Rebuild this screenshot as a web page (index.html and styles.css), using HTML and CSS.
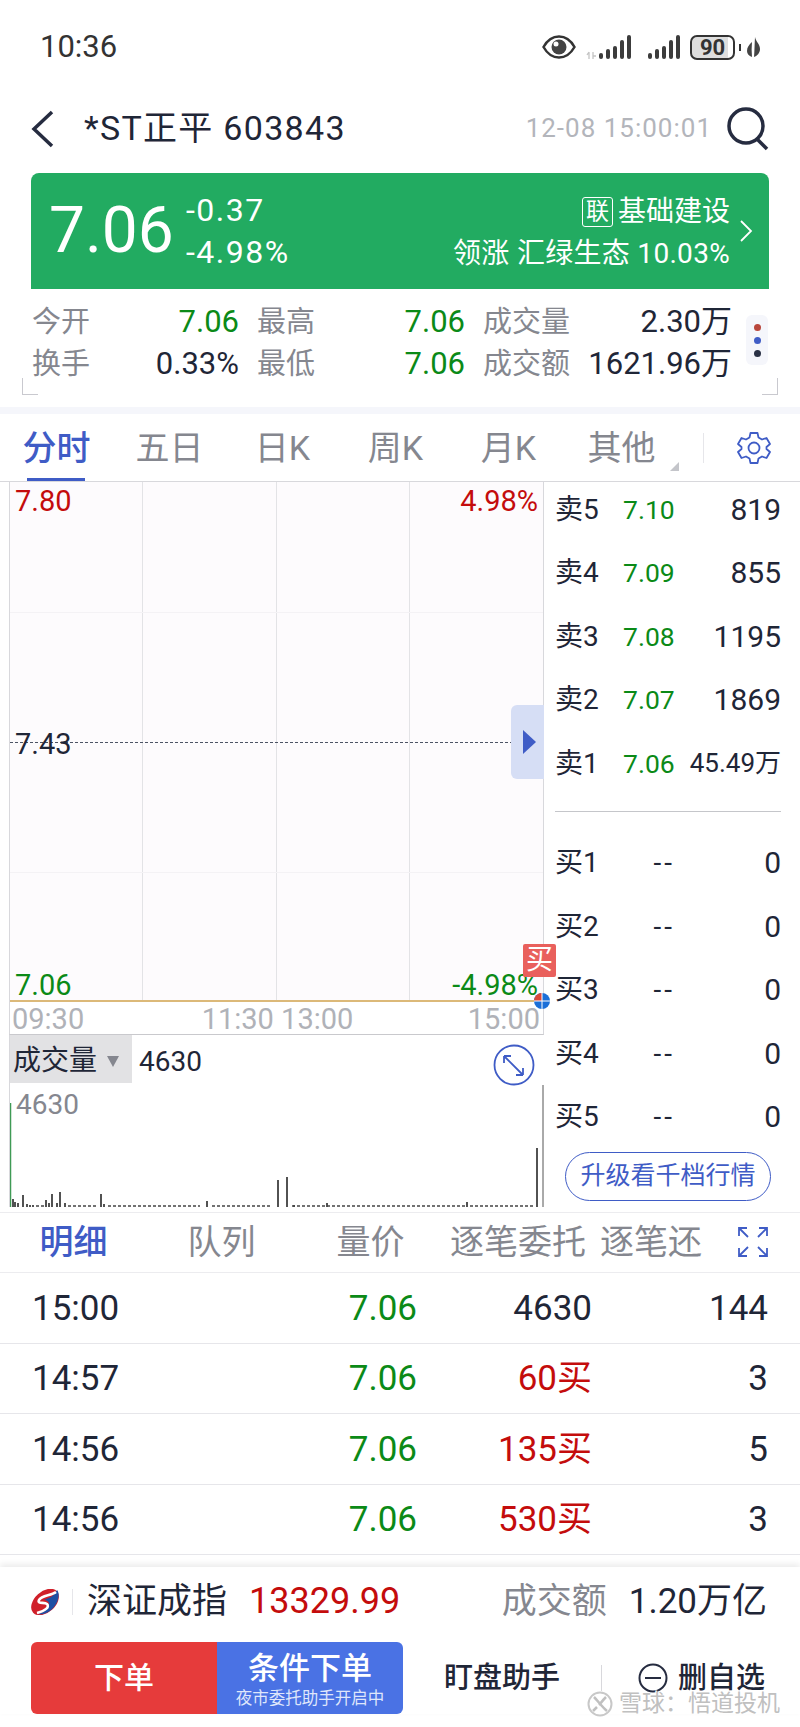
FILE: index.html
```html
<!DOCTYPE html>
<html lang="zh-CN">
<head>
    <meta charset="UTF-8">
    <meta name="viewport" content="width=device-width, initial-scale=1.0">
    <title>*ST正平 603843</title>
    <link rel="stylesheet" href="styles.css">
</head>
<body>
    <div class="page">
        <div class="status-bar">
            <span class="clock">10:36</span>
            <div class="status-icons">
                <svg width="34" height="24" viewBox="0 0 34 24"><path d="M1.500 12C6 4 11 1.500 17 1.500S28 4 32.500 12C28 20 23 22.500 17 22.500S6 20 1.500 12Z" fill="none" stroke="#333" stroke-width="2.500"/><circle cx="17" cy="12" r="7.500" fill="#444"/><circle cx="14" cy="9" r="2.500" fill="#fff"/></svg>
                <svg width="46" height="26" viewBox="0 0 46 26"><path d="M3 25v-7M1 21l2-3M7 25v-7M7 22h3" stroke="#c4c4c4" stroke-width="1.300" fill="none"/><g fill="#3c3c3c"><rect x="13" y="19" width="4" height="6" rx="2"/><rect x="20" y="15" width="4" height="10" rx="2"/><rect x="27" y="12" width="4" height="13" rx="2"/><rect x="34" y="6" width="4" height="19" rx="2"/><rect x="41" y="1" width="4" height="24" rx="2"/></g></svg>
                <svg width="32" height="26" viewBox="0 0 32 26"><g fill="#3c3c3c"><rect x="0" y="19" width="4" height="6" rx="2"/><rect x="7" y="15" width="4" height="10" rx="2"/><rect x="14" y="12" width="4" height="13" rx="2"/><rect x="21" y="6" width="4" height="19" rx="2"/><rect x="28" y="1" width="4" height="24" rx="2"/></g></svg>
                <div class="battery"><span class="battery-level">90</span></div>
                <svg class="leaf" width="13" height="20" viewBox="0 0 13 20"><path d="M8 0C9 5 13 7 13 12C13 16 10 19 7 20C7.500 14 7.500 8 8 0ZM5 5C2 8 0 10 0 14C0 17 2 19 5 20C4.500 15 4.500 10 5 5Z" fill="#444"/></svg>
            </div>
        </div>

        <div class="nav-bar">
            <svg class="back-icon" width="24" height="38" viewBox="0 0 24 38"><path d="M21 2L3 19L21 36" fill="none" stroke="#262c40" stroke-width="3.500"/></svg>
            <span class="stock-name">*ST正平 603843</span>
            <span class="stock-time">12-08 15:00:01</span>
            <svg class="search-icon" width="44" height="44" viewBox="0 0 44 44"><circle cx="20" cy="19" r="17" fill="none" stroke="#262c40" stroke-width="3.500"/><path d="M31 32L41 42" stroke="#262c40" stroke-width="3.500"/></svg>
        </div>

        <div class="banner">
            <div class="price">7.06</div>
            <div class="change">
                <span>-0.37</span>
                <span>-4.98%</span>
            </div>
            <div class="sector">
                <div class="sector-line"><span class="sector-tag">联</span>基础建设</div>
                <div class="sector-line">领涨 汇绿生态 10.03%</div>
            </div>
            <svg class="banner-arrow" width="14" height="22" viewBox="0 0 14 22"><path d="M2 1L12 11L2 21" fill="none" stroke="#fff" stroke-width="1.800"/></svg>
        </div>

        <div class="stats">
            <div class="stats-grid">
                <span class="stat-label">今开</span><span class="stat-value green">7.06</span>
                <span class="stat-label">最高</span><span class="stat-value green">7.06</span>
                <span class="stat-label">成交量</span><span class="stat-value">2.30万</span>
                <span class="stat-label">换手</span><span class="stat-value">0.33%</span>
                <span class="stat-label">最低</span><span class="stat-value green">7.06</span>
                <span class="stat-label">成交额</span><span class="stat-value">1621.96万</span>
            </div>
            <div class="more-dots"><i class="dot-red"></i><i class="dot-blue"></i><i class="dot-dark"></i></div>
        </div>
        <div class="strip"></div>

        <div class="chart-tabs">
            <div class="chart-tab active">分时</div>
            <div class="chart-tab">五日</div>
            <div class="chart-tab">日K</div>
            <div class="chart-tab">周K</div>
            <div class="chart-tab">月K</div>
            <div class="chart-tab other">其他</div>
            <div class="tab-sep"></div>
            <svg class="gear-icon" width="34" height="34" viewBox="0 0 34 34"><path d="M13.500 2H20.500L21.500 6.500L25 8.500L29.500 7L33 13L29.500 16V18L33 21L29.500 27L25 25.500L21.500 27.500L20.500 32H13.500L12.500 27.500L9 25.500L4.500 27L1 21L4.500 18V16L1 13L4.500 7L9 8.500L12.500 6.500Z" fill="none" stroke="#3f5cc6" stroke-width="1.800" stroke-linejoin="round"/><circle cx="17" cy="17" r="5.500" fill="none" stroke="#3f5cc6" stroke-width="1.800"/></svg>
        </div>

        <div class="quote">
            <div class="chart-col">
                <div class="price-chart">
                    <div class="grid-v"></div>
                    <div class="grid-v"></div>
                    <div class="grid-v"></div>
                    <div class="grid-h"></div>
                    <div class="grid-mid"></div>
                    <div class="grid-h low"></div>
                    <span class="axis red top-left">7.80</span>
                    <span class="axis red top-right">4.98%</span>
                    <span class="axis mid-left">7.43</span>
                    <span class="axis green bottom-left">7.06</span>
                    <span class="axis green bottom-right">-4.98%</span>
                    <div class="handle"><i></i></div>
                    <div class="buy-badge">买</div>
                    <div class="price-line"></div>
                    <svg class="end-dot" width="16" height="16" viewBox="0 0 16 16"><circle cx="8" cy="8" r="8" fill="#1b6fd8"/><path d="M0 8a8 8 0 0 1 8-8v8Z" fill="#d9483b"/><path d="M8 0v16M0 8h16" stroke="#fff" stroke-width="1"/></svg>
                </div>
                <div class="time-axis">
                    <span>09:30</span>
                    <span class="time-mid">11:30 13:00</span>
                    <span>15:00</span>
                </div>
                <div class="volume">
                    <div class="volume-head">
                        <div class="volume-select">成交量<i></i></div>
                        <span class="volume-now">4630</span>
                    </div>
                    <span class="volume-max">4630</span>
                    <svg class="expand-round" width="42" height="42" viewBox="0 0 42 42"><circle cx="21" cy="21" r="19.500" fill="none" stroke="#3f5cc6" stroke-width="1.800"/><path d="M11 12L30 31M11 12V19M11 12H18M30 31V24M30 31H23" fill="none" stroke="#3f5cc6" stroke-width="1.800"/></svg>
                    <svg class="volume-bars" width="534" height="122" viewBox="0 0 534 122">
                        <path d="M.5 18V122" stroke="#3f9a55" stroke-width="1.500"/>
                        <path d="M3 114V122M5 117V122M8 118V122M13 110V122M17 119V122M20 120V122M23 120V122M36 115V122M39 118V122M42 109V122M47 118V122M50 107V122M55 118V122M91 109V122M94 119V122M197 116V122M268 95V122M277 92V122M284 120V122M317 118V122M457 117V122M527 63V122" stroke="#1a1a1a" stroke-width="1.500"/>
                        <path d="M26 121H34M58 121H88M98 121H190M202 121H262M282 121H455M460 121H525" stroke="#444" stroke-width="1.500" stroke-dasharray="3 2"/>
                        <path d="M533 0V122" stroke="#555" stroke-width="1"/>
                    </svg>
                </div>
            </div>

            <div class="book">
                <div class="book-rows">
                    <div class="book-row"><span>卖5</span><span class="green">7.10</span><span class="qty">819</span></div>
                    <div class="book-row"><span>卖4</span><span class="green">7.09</span><span class="qty">855</span></div>
                    <div class="book-row"><span>卖3</span><span class="green">7.08</span><span class="qty">1195</span></div>
                    <div class="book-row"><span>卖2</span><span class="green">7.07</span><span class="qty">1869</span></div>
                    <div class="book-row"><span>卖1</span><span class="green">7.06</span><span class="qty small">45.49万</span></div>
                </div>
                <div class="book-sep"></div>
                <div class="book-rows">
                    <div class="book-row"><span>买1</span><span class="dash">--</span><span class="qty">0</span></div>
                    <div class="book-row"><span>买2</span><span class="dash">--</span><span class="qty">0</span></div>
                    <div class="book-row"><span>买3</span><span class="dash">--</span><span class="qty">0</span></div>
                    <div class="book-row"><span>买4</span><span class="dash">--</span><span class="qty">0</span></div>
                    <div class="book-row"><span>买5</span><span class="dash">--</span><span class="qty">0</span></div>
                </div>
                <div class="upgrade-btn">升级看千档行情</div>
            </div>
        </div>

        <div class="detail-tabs">
            <div class="detail-tab active">明细</div>
            <div class="detail-tab">队列</div>
            <div class="detail-tab">量价</div>
            <div class="detail-tab wide">逐笔委托</div>
            <div class="detail-tab clipped">逐笔还原</div>
            <svg class="expand-icon" width="30" height="30" viewBox="0 0 30 30"><path d="M1 9V1H9M21 1H29V9M29 21V29H21M9 29H1V21M1 1L10 10M29 1L20 10M29 29L20 20M1 29L10 20" fill="none" stroke="#3f5cc6" stroke-width="1.800"/></svg>
        </div>

        <div class="trades">
            <div class="trade-row"><span>15:00</span><span class="green">7.06</span><span>4630</span><span>144</span></div>
            <div class="trade-row"><span>14:57</span><span class="green">7.06</span><span class="red">60买</span><span>3</span></div>
            <div class="trade-row"><span>14:56</span><span class="green">7.06</span><span class="red">135买</span><span>5</span></div>
            <div class="trade-row"><span>14:56</span><span class="green">7.06</span><span class="red">530买</span><span>3</span></div>
        </div>

        <div class="footer">
            <div class="index-bar">
                <svg class="index-logo" width="28" height="26" viewBox="0 0 28 26"><ellipse cx="14" cy="13" rx="16" ry="10.500" transform="rotate(-42 14 13)" fill="#d0202a"/><path d="M26 1C29 4 28 12 23 18C18 24 12 26 7 25C13 23 18 20 18 15C18 12 15 11 13 11C17 9 23 8 26 1Z" fill="#1e4fa3"/><path d="M25 3C20 7 11 6 8 11C6 15 13 13 16 15C19 18 14 22 6 24" fill="none" stroke="#fff" stroke-width="2.600"/></svg>
                <span class="index-sep"></span>
                <span class="index-name">深证成指</span>
                <span class="index-value">13329.99</span>
                <span class="index-label">成交额</span>
                <span class="index-amount">1.20万亿</span>
            </div>
            <div class="action-bar">
                <div class="order-btns">
                    <div class="order-btn">下单</div>
                    <div class="cond-btn">
                        <span class="cond-title">条件下单</span>
                        <span class="cond-sub">夜市委托助手开启中</span>
                    </div>
                </div>
                <span class="action-link helper">盯盘助手</span>
                <span class="action-sep"></span>
                <svg class="minus-icon" width="30" height="30" viewBox="0 0 30 30"><circle cx="15" cy="15" r="13.500" fill="none" stroke="#262c40" stroke-width="2"/><path d="M7 15H23" stroke="#262c40" stroke-width="2"/></svg>
                <span class="action-link">删自选</span>
            </div>
        </div>

        <div class="watermark">
            <svg width="26" height="26" viewBox="0 0 26 26"><circle cx="13" cy="13" r="11.500" fill="#fff" stroke="#c8c8c8" stroke-width="2"/><path d="M7 6C11 10 15 16 20 20M19 6C15 10 14 12 12 14M6 20L10 16" fill="none" stroke="#c0c0c0" stroke-width="2.500"/></svg>
            <span>雪球：悟道投机</span>
        </div>
    </div>
</body>
</html>
```
FILE: styles.css
```css
body {
    margin: 0;
    padding: 0;
    background-color: #ffffff;
    font-family: Roboto, "Noto Sans CJK SC", sans-serif;
    line-height: 1.2;
    color: #1f2637;
}

.page {
    position: relative;
    width: 800px;
    height: 1727px;
    overflow: hidden;
}

.green {
    color: #0b8a17;
}

.red {
    color: #c40c0c;
}

/* status bar */
.status-bar {
    height: 90px;
    padding: 4px 40px 0;
    display: flex;
    justify-content: space-between;
    align-items: center;
    box-sizing: border-box;
}

.clock {
    font-size: 31px;
    color: #333;
}

.status-icons {
    display: flex;
    align-items: center;
    gap: 10px;
}

.status-icons svg:nth-child(2) {
    margin-right: 6px;
}

.battery {
    position: relative;
    width: 45px;
    height: 25px;
    box-sizing: border-box;
    border: 2px solid #333;
    border-radius: 7px;
    background: linear-gradient(to right, #dedede 88%, #ffffff 88%);
    text-align: center;
}

.battery::after {
    content: "";
    position: absolute;
    right: -8px;
    top: 7px;
    width: 2px;
    height: 7px;
    background-color: #333;
}

.battery-level {
    display: block;
    font-size: 22px;
    font-weight: 700;
    line-height: 21px;
    color: #333;
}

.leaf {
    margin-left: 2px;
}

/* nav */
.nav-bar {
    height: 83px;
    padding: 0 30px 6px 31px;
    box-sizing: border-box;
    display: flex;
    align-items: center;
}

.back-icon {
    margin-right: 29px;
}

.stock-name {
    font-size: 34px;
    letter-spacing: 1.300px;
    white-space: nowrap;
}

.stock-time {
    margin-left: auto;
    margin-right: 14px;
    font-size: 26px;
    letter-spacing: 1px;
    color: #b3b5bb;
}

/* green banner */
.banner {
    height: 116px;
    margin: 0 31px;
    padding: 0 16px 0 18px;
    display: flex;
    align-items: center;
    background-color: #22ab61;
    border-radius: 8px 8px 0 0;
    color: #ffffff;
}

.price {
    width: 137px;
    font-size: 64px;
    line-height: 1;
}

.change {
    display: flex;
    flex-direction: column;
    gap: 9px;
    font-size: 32px;
    line-height: 33px;
    letter-spacing: 1.500px;
}

.sector {
    margin-left: auto;
    margin-top: 3px;
    display: flex;
    flex-direction: column;
    align-items: flex-end;
    gap: 5px;
    font-size: 28px;
    line-height: 37px;
}

.sector-line {
    display: flex;
    align-items: center;
    white-space: pre;
}

.sector-line:last-child {
    letter-spacing: 0.300px;
}

.sector-tag {
    width: 31px;
    height: 30px;
    margin-right: 5px;
    box-sizing: border-box;
    border: 1px solid #fff;
    border-radius: 3px;
    font-size: 23px;
    line-height: 27px;
    text-align: center;
}

.banner-arrow {
    margin-left: 9px;
}

/* stats */
.stats {
    position: relative;
    height: 118px;
    box-sizing: border-box;
    padding: 12px 0 0 32px;
}

.stats::before,
.stats::after {
    content: "";
    position: absolute;
    top: 89px;
    width: 15px;
    height: 16px;
    border-bottom: 1px solid #c9c9cf;
}

.stats::before {
    left: 22px;
    border-left: 1px solid #c9c9cf;
}

.stats::after {
    right: 22px;
    border-right: 1px solid #c9c9cf;
}

.stats-grid {
    display: grid;
    grid-template-columns: 56px 133px 56px 134px 86px 145px;
    column-gap: 18px;
    grid-auto-rows: 42px;
    align-items: center;
    white-space: nowrap;
}

.stat-label {
    font-size: 29px;
    color: #85878f;
}

.stat-value {
    font-size: 31px;
    text-align: right;
}

.more-dots {
    position: absolute;
    left: 746px;
    top: 26px;
    width: 22px;
    height: 50px;
    display: flex;
    flex-direction: column;
    align-items: center;
    justify-content: center;
    gap: 6px;
    background-color: #f5f6fb;
    border-radius: 6px;
}

.more-dots i {
    width: 7px;
    height: 7px;
    border-radius: 50%;
}

.dot-red {
    background-color: #b9473c;
}

.dot-blue {
    background-color: #3f5cc6;
}

.dot-dark {
    background-color: #2a3145;
}

.strip {
    height: 7px;
    background-color: #f5f6fb;
}

/* chart tabs */
.chart-tabs {
    height: 67px;
    display: flex;
    align-items: center;
}

.chart-tab {
    position: relative;
    width: 113px;
    height: 67px;
    font-size: 34px;
    line-height: 68px;
    text-align: center;
    color: #85878f;
}

.chart-tab.active {
    color: #3f5cc6;
    font-weight: 500;
}

.chart-tab.active::after {
    content: "";
    position: absolute;
    left: 27px;
    bottom: 0;
    width: 58px;
    height: 3px;
    background-color: #3f5cc6;
}

.chart-tab.other::after {
    content: "";
    position: absolute;
    right: -1px;
    bottom: 10px;
    border-left: 9px solid transparent;
    border-bottom: 9px solid #c4c5ca;
}

.tab-sep {
    width: 1px;
    height: 30px;
    margin-left: 25px;
    background-color: #e6e6ea;
}

.gear-icon {
    margin-left: 33px;
}

/* quote area */
.quote {
    display: flex;
    height: 731px;
    border-top: 1px solid #d8d8dc;
    box-sizing: border-box;
}

.chart-col {
    width: 535px;
    margin-left: 9px;
    flex-shrink: 0;
}

.price-chart {
    position: relative;
    height: 520px;
    box-sizing: border-box;
    border-left: 1px solid #d8d8dc;
    border-right: 1px solid #d8d8dc;
    background-color: #fdfbfd;
    display: grid;
    grid-template-columns: repeat(4, 1fr);
}

.grid-v {
    grid-row: 1;
    border-right: 1px solid #e3e3e6;
}

.grid-h {
    position: absolute;
    left: 0;
    right: 0;
    top: 130px;
    border-top: 1px solid #f4f2f5;
}

.grid-h.low {
    top: 390px;
}

.grid-mid {
    position: absolute;
    left: 0;
    right: 0;
    top: 260px;
    border-top: 1px dashed #4c5364;
}

.axis {
    position: absolute;
    font-size: 29px;
    line-height: 30px;
    white-space: nowrap;
}

.top-left {
    left: 5px;
    top: 4px;
}

.top-right {
    right: 5px;
    top: 4px;
}

.mid-left {
    left: 5px;
    top: 247px;
}

.bottom-left {
    left: 5px;
    bottom: 2px;
}

.bottom-right {
    right: 5px;
    bottom: 2px;
}

.handle {
    position: absolute;
    right: -1px;
    top: 223px;
    width: 33px;
    height: 74px;
    display: flex;
    align-items: center;
    justify-content: flex-start;
    background-color: #d6def5;
    border-radius: 6px 0 0 6px;
}

.handle i {
    margin-left: 12px;
    border-left: 13px solid #3f5cc6;
    border-top: 12px solid transparent;
    border-bottom: 12px solid transparent;
}

.buy-badge {
    position: absolute;
    left: 513px;
    top: 462px;
    width: 33px;
    height: 33px;
    background-color: #e9605c;
    border-radius: 2px;
    font-size: 27px;
    line-height: 32px;
    text-align: center;
    color: #ffffff;
    z-index: 1;
}

.price-line {
    position: absolute;
    left: 0;
    right: 0;
    bottom: 0;
    height: 2px;
    background-color: #dcb979;
}

.end-dot {
    position: absolute;
    left: 524px;
    bottom: -7px;
    z-index: 1;
}

.time-axis {
    height: 33px;
    box-sizing: border-box;
    padding: 3px 3px 0 2px;
    display: flex;
    justify-content: space-between;
    align-items: center;
    border-left: 1px solid #d8d8dc;
    border-right: 1px solid #d8d8dc;
    border-bottom: 1px solid #c9c9cd;
    font-size: 29px;
    color: #b0b2b8;
}

.time-mid {
    margin-left: 3px;
}

.volume {
    position: relative;
    height: 172px;
    border-left: 1px solid #d8d8dc;
    box-sizing: border-box;
}

.volume-head {
    display: flex;
    align-items: center;
    height: 48px;
}

.volume-select {
    width: 122px;
    height: 48px;
    box-sizing: border-box;
    padding: 4px 0 0 3px;
    display: flex;
    align-items: center;
    background-color: #e2e2e4;
    font-size: 28px;
}

.volume-select i {
    margin-left: 10px;
    border-top: 11px solid #85878f;
    border-left: 6px solid transparent;
    border-right: 6px solid transparent;
}

.volume-now {
    margin: 6px 0 0 7px;
    font-size: 28px;
}

.volume-max {
    position: absolute;
    left: 6px;
    top: 53px;
    font-size: 28px;
    line-height: 34px;
    color: #85878f;
}

.expand-round {
    position: absolute;
    left: 483px;
    top: 9px;
}

.volume-bars {
    position: absolute;
    left: 0;
    bottom: 0;
    display: block;
}

/* order book */
.book {
    flex: 1;
    padding: 0 19px 0 11px;
}

.book-rows {
    display: flex;
    flex-direction: column;
}

.book-rows:first-child {
    margin-top: -4px;
}

.book-row {
    height: 63.500px;
    display: grid;
    grid-template-columns: 68px 52px 1fr;
    align-items: center;
    font-size: 28px;
    white-space: nowrap;
}

.book-row .green {
    font-size: 26.500px;
}

.dash {
    text-align: right;
    letter-spacing: 3px;
}

.qty {
    text-align: right;
    font-size: 30px;
}

.qty.small {
    font-size: 26px;
}

.book-sep {
    margin-top: 15px;
    margin-bottom: 20px;
    border-top: 1px solid #c5c6ca;
}

.upgrade-btn {
    width: 206px;
    height: 49px;
    margin: 3px 0 0 10px;
    box-sizing: border-box;
    border: 1.500px solid #3f5cc6;
    border-radius: 25px;
    font-size: 25px;
    line-height: 46px;
    text-align: center;
    color: #3f5cc6;
    white-space: nowrap;
}

/* detail tabs */
.detail-tabs {
    height: 61px;
    padding-bottom: 1px;
    display: flex;
    align-items: center;
    border-bottom: 1px solid #ececef;
    box-sizing: border-box;
    border-top: 1px solid #ececef;
}

.detail-tab {
    width: 149px;
    font-size: 34px;
    text-align: center;
    color: #85878f;
    flex-shrink: 0;
}

.detail-tab.active {
    width: 147px;
    color: #3f5cc6;
    font-weight: 500;
}

.detail-tab.wide {
    width: 150px;
    padding-left: 5px;
    text-align: left;
    white-space: nowrap;
}

.detail-tab.clipped {
    width: 102px;
    overflow: hidden;
    white-space: nowrap;
    text-align: left;
}

.expand-icon {
    margin-left: 36px;
}

/* trades */
.trades {
    display: flex;
    flex-direction: column;
}

.trade-row {
    height: 70.500px;
    box-sizing: border-box;
    padding: 2px 32px 0;
    display: grid;
    grid-template-columns: 232px 153px 175px 176px;
    align-items: center;
    border-bottom: 1px solid #e6e6ea;
    font-size: 35px;
}

.trade-row span:not(:first-child) {
    text-align: right;
}

/* footer */
.footer {
    margin-top: 12px;
    position: relative;
    box-shadow: 0 -3px 6px rgba(0, 0, 0, 0.08);
    background-color: #ffffff;
}

.index-bar {
    height: 75px;
    padding: 0 33px 5px 31px;
    box-sizing: border-box;
    display: flex;
    align-items: center;
    font-size: 35px;
}

.index-sep {
    width: 1px;
    height: 26px;
    margin: 0 14px 0 13px;
    background-color: #e6e6ea;
}

.index-name {
    width: 162px;
    white-space: nowrap;
}

.index-value {
    color: #c40c0c;
    font-size: 36px;
}

.index-label {
    margin-left: auto;
    margin-right: 22px;
    color: #85878f;
}

.index-amount {
    font-size: 35px;
}

.action-bar {
    height: 72px;
    padding-left: 31px;
    display: flex;
    align-items: center;
}

.order-btns {
    width: 372px;
    height: 72px;
    display: flex;
    border-radius: 6px;
    overflow: hidden;
    color: #ffffff;
}

.order-btn {
    width: 186px;
    background-color: #e63b3b;
    font-size: 30px;
    font-weight: 500;
    line-height: 72px;
    text-align: center;
}

.cond-btn {
    width: 186px;
    display: flex;
    flex-direction: column;
    align-items: center;
    background-color: #4a72e4;
}

.cond-title {
    margin-top: 7px;
    font-size: 31px;
    font-weight: 500;
    line-height: 40px;
}

.cond-sub {
    font-size: 16.500px;
    line-height: 20px;
    color: #dfe6fb;
    white-space: nowrap;
}

.action-link {
    font-size: 29px;
    font-weight: 500;
    white-space: nowrap;
}

.helper {
    margin-left: 41px;
}

.action-sep {
    width: 1px;
    height: 26px;
    margin: 0 36px 0 41px;
    background-color: #d8d8dc;
}

.minus-icon {
    margin-right: 10px;
}

.watermark {
    position: absolute;
    left: 587px;
    top: 1690px;
    display: flex;
    align-items: center;
    gap: 6px;
    font-size: 23px;
    color: #c0c0c0;
    text-shadow: 1px 1px 0 #fff, -1px -1px 0 #fff;
    white-space: nowrap;
}
```
